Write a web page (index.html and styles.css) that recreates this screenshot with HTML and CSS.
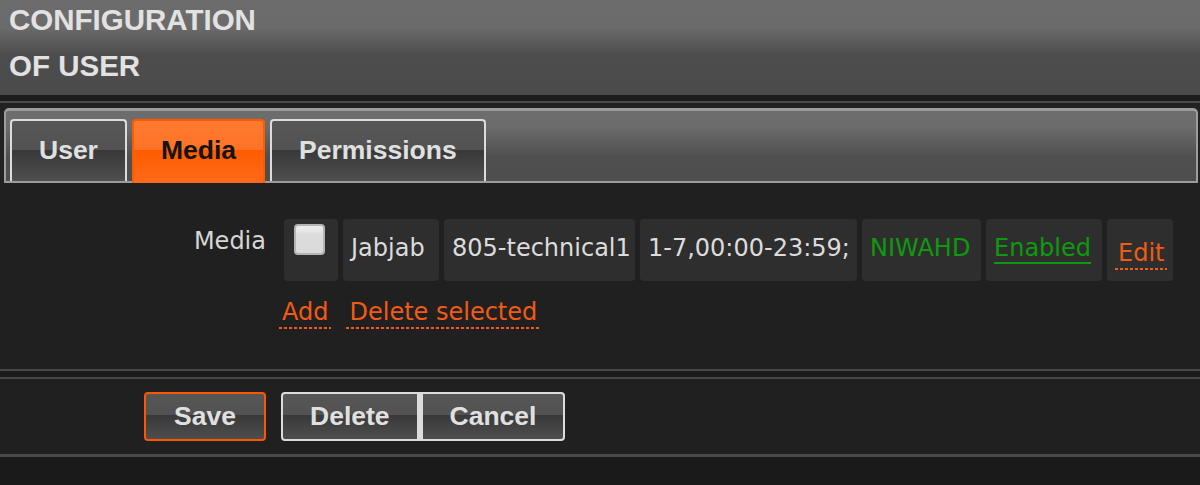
FILE: index.html
```html
<!DOCTYPE html>
<html>
<head>
<meta charset="utf-8">
<title>Configuration of user</title>
<link rel="stylesheet" href="styles.css">
</head>
<body>
  <div class="header">
    <h1 class="title">CONFIGURATION<br>OF USER</h1>
  </div>
  <div class="sep"></div>
  <div class="tabs-wrap">
    <div class="tabs">
      <div class="tab">User</div>
      <div class="tab tab-active">Media</div>
      <div class="tab">Permissions</div>
    </div>
  </div>
  <div class="form">
    <div class="label">Media</div>
    <div class="field">
      <div class="media-table">
        <div class="cell c-check"><span class="checkbox"></span></div>
        <div class="cell c-type">Jabjab</div>
        <div class="cell c-sendto">805-technical1</div>
        <div class="cell c-when">1-7,00:00-23:59;</div>
        <div class="cell c-sev green">NIWAHD</div>
        <div class="cell c-status"><span class="status green">Enabled</span></div>
        <div class="cell c-act"><a class="link" href="#">Edit</a></div>
      </div>
      <div class="links">
        <a class="link" href="#">Add</a>
        <a class="link" href="#">Delete selected</a>
      </div>
    </div>
  </div>
  <div class="rule"></div>
  <div class="footer">
    <div class="btn-col"><button class="btn btn-primary">Save</button></div>
    <div class="btn-group">
      <button class="btn btn-left">Delete</button><button class="btn btn-right">Cancel</button>
    </div>
  </div>
</body>
</html>
```
FILE: styles.css
```css
html, body {
  margin: 0;
  padding: 0;
}
body {
  background: #1a1a1a;
  font-family: "DejaVu Sans", sans-serif;
  font-size: 24px;
  color: #dcdcdc;
}

.header {
  height: 95px;
  box-sizing: border-box;
  padding-left: 9px;
  background: linear-gradient(#6c6c6c 0, #6b6b6b 27px, #4d4d4d 55px, #4b4b4b 100%);
  overflow: hidden;
}
.title {
  margin: -3px 0 0;
  font: bold 29.5px/46px "Liberation Sans", Arial, sans-serif;
  color: #e2e2e2;
}

.sep {
  height: 6px;
  background: #1c1c1c;
  border-bottom: 2px solid #4a4a4a;
}

.tabs-wrap {
  background: #222222;
  padding-top: 5px;
}
.tabs {
  display: flex;
  align-items: flex-end;
  gap: 5px;
  height: 62px;
  padding: 8px 0 0 4px;
  margin: 0 2px 0 4px;
  border: 2px solid #9c9c9c;
  border-top-width: 3px;
  border-radius: 5px 5px 0 0;
  background: linear-gradient(#6d6d6d 0, #6c6c6c 16px, #4f4f4f 46px, #4e4e4e 100%);
}
.tab {
  height: 60px;
  padding: 0 27px;
  border: 2px solid #dcdcdc;
  border-bottom: 0;
  border-radius: 4px 4px 0 0;
  font: bold 26.5px/58px "Liberation Sans", Arial, sans-serif;
  color: #e0e0e0;
  background: linear-gradient(#575757 0, #525252 48%, #383838 48%, #4f4f4f 100%);
}
.tab-active {
  height: 62px;
  margin-bottom: -2px;
  border-color: #ff5a00;
  color: #141414;
  background: linear-gradient(#ff7b30 0, #ff7227 47%, #ff5c00 47%, #ff6a1a 100%);
}

.form {
  display: grid;
  grid-template-columns: 266px 1fr;
  column-gap: 13px;
  padding: 31px 0 40px;
  background: #202020;
}
.label {
  text-align: right;
  padding-top: 13px;
  line-height: 28px;
  color: #d6d6d6;
}
.media-table {
  display: flex;
  gap: 5px;
  padding: 5px;
}
.cell {
  height: 62px;
  box-sizing: border-box;
  padding: 15px 8px 0;
  background: #2e2e2e;
  border-radius: 4px;
  line-height: 28px;
  white-space: nowrap;
}
.c-check { width: 54px; padding: 5px 10px 0; }
.c-type { width: 96px; }
.c-sendto { width: 191px; }
.c-when { width: 217px; }
.c-sev { width: 119px; }
.c-status { width: 116px; }
.c-act { width: 66px; padding-top: 20px; }

.checkbox {
  display: block;
  width: 31px;
  height: 31px;
  box-sizing: border-box;
  border: 2px solid #b4b4b4;
  border-radius: 4px;
  background: linear-gradient(#ededed 0, #e6e6e6 20%, #dcdcdc 30%, #dadada 100%);
}

.green { color: #0e9a0e; }
.status {
  border-bottom: 2px solid #0e9a0e;
}

.link {
  color: #f25b13;
  text-decoration: none;
  padding: 0 3px 3px;
  line-height: 28px;
  background: linear-gradient(90deg, #f25b13 60%, transparent 60%) 0 100% / 5px 2px repeat-x;
}
.links {
  display: flex;
  gap: 15px;
  margin-top: 12px;
}

.rule {
  height: 6px;
  background: #1b1b1b;
  border-top: 2px solid #484848;
  border-bottom: 2px solid #484848;
}

.footer {
  display: grid;
  grid-template-columns: 266px 1fr;
  column-gap: 15px;
  padding: 13px 0;
  background: #202020;
  border-bottom: 3px solid #4a4a4a;
}
.btn-col {
  display: flex;
  justify-content: flex-end;
}
.btn-group {
  display: flex;
}
.btn {
  height: 49px;
  box-sizing: border-box;
  margin: 0;
  padding: 0 27px;
  border: 2px solid #dcdcdc;
  border-radius: 4px;
  font: bold 26.5px/45px "Liberation Sans", Arial, sans-serif;
  color: #e0e0e0;
  background: linear-gradient(#565656 0, #525252 47%, #393939 47%, #4e4e4e 100%);
}
.btn-primary {
  padding: 0 28px;
  border-color: #ff5500;
}
.btn-left {
  border-right-width: 3px;
  border-radius: 4px 0 0 4px;
}
.btn-right {
  border-left-width: 3px;
  border-radius: 0 4px 4px 0;
}
```
